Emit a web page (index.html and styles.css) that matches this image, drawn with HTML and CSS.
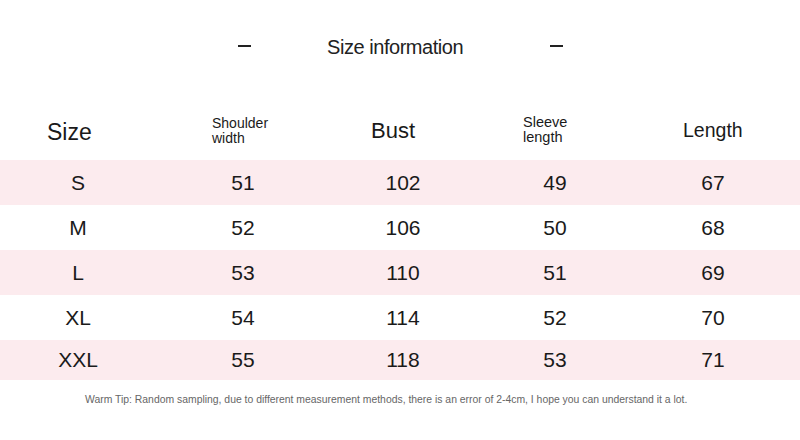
FILE: index.html
```html
<!DOCTYPE html>
<html>
<head>
<meta charset="utf-8">
<link rel="stylesheet" href="styles.css">
</head>
<body>
<div class="page">
  <div class="title-row">
    <span class="dash"></span>
    <span class="title">Size information</span>
    <span class="dash"></span>
  </div>
  <div class="table">
    <div class="row head">
      <div class="c c1 h-size">Size</div>
      <div class="c c2 h-small h-shoulder">Shoulder<br>width</div>
      <div class="c c3 h-bust">Bust</div>
      <div class="c c4 h-small h-sleeve">Sleeve<br>length</div>
      <div class="c c5 h-length">Length</div>
    </div>
    <div class="row pink"><div class="c c1 sz">S</div><div class="c c2">51</div><div class="c c3">102</div><div class="c c4">49</div><div class="c c5">67</div></div>
    <div class="row"><div class="c c1 sz">M</div><div class="c c2">52</div><div class="c c3">106</div><div class="c c4">50</div><div class="c c5">68</div></div>
    <div class="row pink"><div class="c c1 sz">L</div><div class="c c2">53</div><div class="c c3">110</div><div class="c c4">51</div><div class="c c5">69</div></div>
    <div class="row"><div class="c c1 sz">XL</div><div class="c c2">54</div><div class="c c3">114</div><div class="c c4">52</div><div class="c c5">70</div></div>
    <div class="row pink last"><div class="c c1 sz">XXL</div><div class="c c2">55</div><div class="c c3">118</div><div class="c c4">53</div><div class="c c5">71</div></div>
  </div>
  <p class="tip">Warm Tip: Random sampling, due to different measurement methods, there is an error of 2-4cm, I hope you can understand it a lot.</p>
</div>
</body>
</html>
```
FILE: styles.css
```css
html, body {
  margin: 0;
  padding: 0;
  background: #ffffff;
}
.page {
  width: 800px;
  height: 440px;
  font-family: "Liberation Sans", Arial, sans-serif;
  color: #1a1a1a;
  overflow: hidden;
}
.title-row {
  display: grid;
  grid-template-columns: 238px 13px 76px 137px 86px 13px;
  align-items: center;
  height: 92px;
}
.dash {
  height: 1.5px;
  background: #222;
}
.title-row .dash:first-child { grid-column: 2; }
.title-row .title { grid-column: 4; }
.title-row .dash:last-child { grid-column: 6; }
.title {
  font-size: 20px;
  letter-spacing: -0.45px;
  white-space: nowrap;
  color: #222;
  padding-top: 2px;
}
.table {
  display: flex;
  flex-direction: column;
}
.row {
  display: grid;
  grid-template-columns: 156px 174px 146px 158px 158px;
  height: 45px;
  align-items: center;
  font-size: 21px;
}
.row.pink { background: #fcebee; }
.row.last { height: 40px; }
.c { text-align: center; }
.head {
  height: 68px;
  padding-top: 10px;
  box-sizing: border-box;
}
.head .c { text-align: left; }
.h-size { font-size: 23px; padding-left: 47px; padding-top: 2px; }
.h-small {
  font-size: 14px;
  line-height: 15px;
}
.h-shoulder { padding-left: 56px; }
.h-sleeve { padding-left: 47px; font-size: 14.5px; line-height: 15px; padding-bottom: 2px; }
.h-bust { font-size: 22px; padding-left: 41px; }
.h-length { font-size: 19.5px; padding-left: 49px; padding-bottom: 2px; }
.tip {
  margin: 14px 0 0 85px;
  font-size: 10.4px;
  color: #666;
  white-space: nowrap;
}
```
